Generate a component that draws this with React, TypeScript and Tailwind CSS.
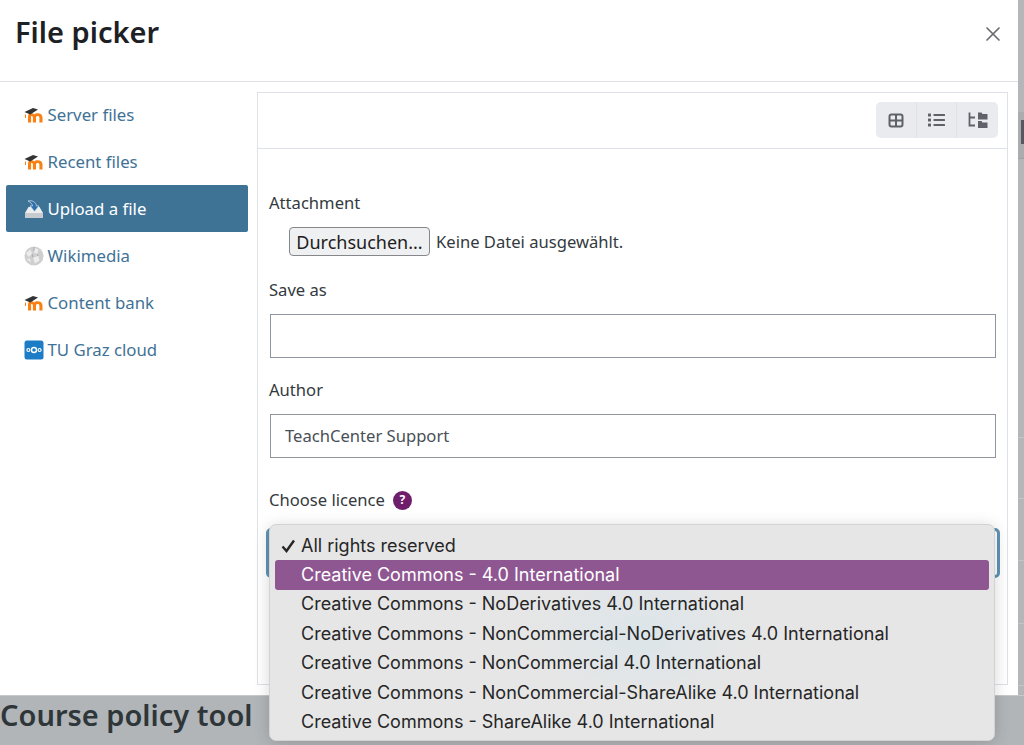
import { X } from "lucide-react";

const repos = [
  { name: "Server files", icon: "moodle" },
  { name: "Recent files", icon: "moodle" },
  { name: "Upload a file", icon: "upload" },
  { name: "Wikimedia", icon: "wiki" },
  { name: "Content bank", icon: "moodle" },
  { name: "TU Graz cloud", icon: "cloud" },
];

const licences = [
  "All rights reserved",
  "Creative Commons - 4.0 International",
  "Creative Commons - NoDerivatives 4.0 International",
  "Creative Commons - NonCommercial-NoDerivatives 4.0 International",
  "Creative Commons - NonCommercial 4.0 International",
  "Creative Commons - NonCommercial-ShareAlike 4.0 International",
  "Creative Commons - ShareAlike 4.0 International",
];

function RepoIcon({ type }: { type: string }) {
  if (type === "moodle") {
    return (
      <svg width="20" height="16" viewBox="0 0 20 16" className="shrink-0">
        <path d="M1.5 11V7.5" fill="none" stroke="#f98012" strokeWidth="1" />
        <path d="M4 15.5V9.5C4 7.3 5.4 6.2 7.4 6.2C8.6 6.2 9.5 6.7 10.2 7.6C11 6.7 12 6.2 13.6 6.2C16.4 6.2 18.5 7.7 18.5 10.5V15.5H15.4V10.8C15.4 9.6 14.8 9 13.7 9C12.6 9 12 9.6 12 10.8V15.5H8.9V10.8C8.9 9.6 8.4 9 7.6 9C7.2 9 7.1 9.1 7.1 9.4V15.5Z" fill="#f98012" />
        <path d="M0.5 5L9 1L14 2.6L6.2 7.4Z" fill="#333" />
      </svg>
    );
  }
  if (type === "upload") {
    return (
      <svg width="20" height="20" viewBox="0 0 20 20" className="shrink-0">
        <path d="M4.5 8H15.5L19 14V19H1V14Z" fill="#eceef0" />
        <path d="M1 14H19V19H1Z" fill="#c7cbcf" />
        <path d="M4 2C8 1 12 3 12.5 7H15L10.5 12.5L6 7H8.5C8.4 5 6.5 3.2 4 2Z" fill="#2f6fae" stroke="#dfe6ec" strokeWidth="0.7" />
      </svg>
    );
  }
  if (type === "wiki") {
    return (
      <svg width="20" height="20" viewBox="0 0 20 20" className="shrink-0">
        <circle cx="10" cy="10" r="9.5" fill="#cfcfcf" />
        <path d="M2 7L6.5 3.5L8 8L4.5 11ZM10.5 2L14.5 3.5L13 8L10 6.5ZM9 11.5L14.5 10L15.5 14.5L11 17.5ZM2.5 13L6 12.5L7 16.5Z" fill="#ececec" />
        <path d="M10 1V5M8 8L9 11.5M13 8L14.5 10" stroke="#9a9a9a" strokeWidth="0.7" />
      </svg>
    );
  }
  return (
    <svg width="20" height="20" viewBox="0 0 20 20" className="shrink-0">
      <rect x="0.5" y="0.5" width="19" height="19" rx="2.5" fill="#1d7cc6" />
      <circle cx="10" cy="10" r="2.5" fill="none" stroke="#fff" strokeWidth="1.4" />
      <circle cx="4.4" cy="10" r="1.5" fill="none" stroke="#fff" strokeWidth="1.2" />
      <circle cx="15.6" cy="10" r="1.5" fill="none" stroke="#fff" strokeWidth="1.2" />
    </svg>
  );
}

function GridIcon() {
  return (
    <svg width="16" height="15" viewBox="0 0 16 15" fill="none" stroke="#5f6369" strokeWidth="2">
      <rect x="1.5" y="1.5" width="13" height="12" rx="2" />
      <path d="M8 1.5V13.5M1.5 7.5H14.5" />
    </svg>
  );
}

function ListIcon() {
  return (
    <svg width="17" height="14" viewBox="0 0 17 14" fill="#5f6369">
      <rect x="0" y="0.5" width="3" height="3" rx="0.5" />
      <rect x="0" y="5.5" width="3" height="3" rx="0.5" />
      <rect x="0" y="10.5" width="3" height="3" rx="0.5" />
      <rect x="5.5" y="1" width="11.5" height="2" rx="0.5" />
      <rect x="5.5" y="6" width="11.5" height="2" rx="0.5" />
      <rect x="5.5" y="11" width="11.5" height="2" rx="0.5" />
    </svg>
  );
}

function TreeIcon() {
  return (
    <svg width="20" height="16" viewBox="0 0 20 16">
      <path d="M1.5 0.5V13.5H7M1.5 5.5H7" fill="none" stroke="#5f6369" strokeWidth="1.8" />
      <path d="M10 0.5H13.5L14.5 2H19.5V7.5H10ZM10 9H13.5L14.5 10.5H19.5V16H10Z" fill="#5f6369" />
    </svg>
  );
}

export default function App() {
  return (
    <div className="relative w-[1024px] h-[745px] overflow-hidden bg-[#b0b4b7] font-['Noto_Sans',sans-serif] text-[#343a40]">
      <div className="flex h-[695px]">
        <div className="w-[1018px] bg-white flex flex-col">
          <div className="h-[82px] shrink-0 border-b border-[#dee2e6] flex items-start justify-between pl-[15px] pr-[13px] pt-[13px]">
            <h1 className="text-[29px] leading-[38px] font-semibold text-[#1d2125]">File picker</h1>
            <X className="mt-[9px] text-[#6a6e73]" size={24} strokeWidth={1.7} />
          </div>
          <div className="flex flex-1 min-h-0 pl-1.5 pr-2.5 pt-2.5 pb-2.5">
            <ul className="w-[251px] shrink-0 flex flex-col -mt-px">
              {repos.map((r) => {
                const active = r.name === "Upload a file";
                return (
                  <li
                    key={r.name}
                    className={`h-[47px] flex items-center gap-[3.5px] pl-[18px] text-[16.8px] rounded-[2px] w-[242px] ${active ? "bg-[#3e7396] text-white" : "text-[#3f7296]"}`}
                  >
                    <RepoIcon type={r.icon} />
                    <span>{r.name}</span>
                  </li>
                );
              })}
            </ul>
            <div className="flex-1 border border-[#dee2e6] flex flex-col">
              <div className="h-[56px] shrink-0 border-b border-[#dee2e6] flex justify-end items-start pt-[9px] pr-[9px]">
                <div className="flex h-9 bg-[#e9ebee] rounded-[5px]">
                  <div className="w-[41px] flex items-center justify-center border-r border-[#dfe1e4]">
                    <GridIcon />
                  </div>
                  <div className="w-[40px] flex items-center justify-center border-r border-[#dfe1e4]">
                    <ListIcon />
                  </div>
                  <div className="w-[41px] flex items-center justify-center">
                    <TreeIcon />
                  </div>
                </div>
              </div>
              <div className="pl-3 pr-[11px] pt-[42px] text-[16.6px]">
                <div className="leading-6 -ml-px">Attachment</div>
                <div className="flex items-center mt-[12px] pl-[19px]">
                  <button className="h-[29px] w-[141px] pt-px bg-[#eff0f1] border border-[#85878a] rounded-[4px] text-[18px] text-[#1d1d1d] font-['Noto_Sans',sans-serif]">
                    Durchsuchen...
                  </button>
                  <span className="ml-[6px] pt-px">Keine Datei ausgewählt.</span>
                </div>
                <div className="leading-6 mt-[22px] -ml-px">Save as</div>
                <div className="h-[44px] mt-[12px] border border-[#8f959e]" />
                <div className="leading-6 mt-[20px] -ml-px">Author</div>
                <div className="h-[44px] mt-[12px] border border-[#8f959e] flex items-center px-[14px] text-[#495057]">
                  TeachCenter Support
                </div>
                <div className="flex items-center gap-2 leading-6 mt-[30px] -ml-px">
                  Choose licence
                  <span className="w-[19px] h-[19px] rounded-full bg-[#6f1e6b] text-white text-[12px] font-bold flex items-center justify-center">?</span>
                </div>
                <div className="h-[50px] mt-[16px] -mx-[4px] rounded-[5px] border-[3px] border-[#5f93b5]" />
              </div>
            </div>
          </div>
        </div>
        <div className="flex-1 bg-[#b3b7ba] flex flex-col">
          <div className="h-[47px] mt-[112px] bg-[#a9adb0] border-b border-[#9fa3a6] pt-[8px]">
            <div className="w-[3px] h-[24px] ml-[3px] bg-[#55595d]" />
          </div>
          <div className="h-px mt-[278px] bg-[#c2c5c7]" />
          <div className="h-px mt-[60px] bg-[#c2c5c7]" />
          <div className="h-px mt-[61px] bg-[#c2c5c7]" />
          <div className="h-px mt-[62px] bg-[#c2c5c7]" />
          <div className="h-px mt-[61px] bg-[#c2c5c7]" />
        </div>
      </div>
      <div className="h-[50px] bg-[#b1b5b8] border-t border-[#c6c9cb] text-[29px] leading-[38px] font-semibold text-[#2f363a]">
        Course policy tool
      </div>
      <div className="absolute left-[269px] top-[524px] w-[726px] h-[217px] rounded-[7px] border border-[#d3d3d3] bg-[#e6e6e6] bg-[radial-gradient(ellipse_110px_70px_at_370px_110px,#dce5ea,#e6e6e6)] shadow-[0_2px_16px_rgba(0,0,0,0.16)] px-[5px] pt-[6px] font-['Inter',sans-serif] text-[18px] text-[#262626]">
        {licences.map((l, i) => (
          <div
            key={l}
            className={`h-[29.4px] flex items-center rounded-[3px] pl-[26px] leading-none relative ${i === 1 ? "bg-[#8f5792] text-white" : ""}`}
          >
            {i === 0 && (
              <svg width="15" height="14" viewBox="0 0 15 14" className="absolute left-[6px]">
                <path d="M1.5 7.5L5.5 12L13 1.5" fill="none" stroke="#262626" strokeWidth="2.4" />
              </svg>
            )}
            {l}
          </div>
        ))}
      </div>
    </div>
  );
}
